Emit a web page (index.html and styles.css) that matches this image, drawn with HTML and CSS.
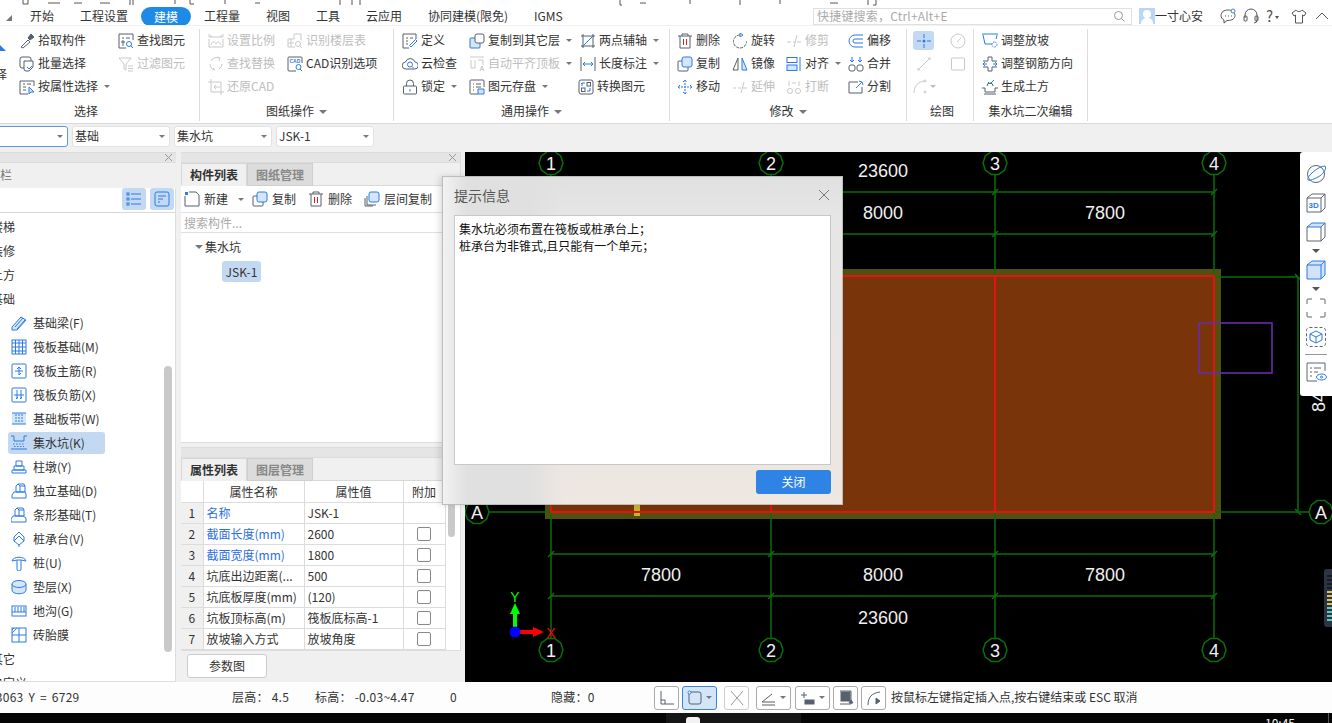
FILE: index.html
```html
<!DOCTYPE html>
<html lang="zh-CN">
<head>
<meta charset="utf-8">
<title>建模</title>
<link rel="stylesheet" href="styles.css">
</head>
<body>
<div class="app">
  <svg class="title-strip" width="1332" height="7" viewBox="0 0 1332 7"><path d="M23 0v4h5V0M48 3h12M74 3h8M100 3h10M130 0v5M133 0v5M175 0v4M190 0v4h4M225 0v4M255 3h5M340 0v5M352 0v5M360 0v5M620 0v5h2M640 3h6M690 0v4M740 0v5M780 0v4M830 3h8M868 0v5M876 0v5h-3"/></svg>

  <nav class="tabs">
    <svg class="tab-arrow" width="6" height="6" viewBox="0 0 6 6"><path d="M6 0v6H0z"/></svg>
    <span class="tab w50">开始</span>
    <span class="tab w61">工程设置</span>
    <span class="tab active">建模</span>
    <span class="tab w62">工程量</span>
    <span class="tab w50">视图</span>
    <span class="tab w50">工具</span>
    <span class="tab w62">云应用</span>
    <span class="tab w106">协同建模(限免)</span>
    <span class="tab w279">IGMS</span>
    <div class="search"><span>快捷键搜索，Ctrl+Alt+E</span><svg class="search-ic" width="12" height="12" viewBox="0 0 12 12"><circle cx="5.5" cy="5.5" r="4"/><path d="M8.5 8.5l3 3"/></svg></div>
    <svg class="avatar" width="16" height="16" viewBox="0 0 16 16"><rect width="16" height="16" fill="#b9d7f5"/><circle cx="8" cy="6" r="4" fill="#fff"/><path d="M2 16c0-5 3-6 6-6s6 1 6 6z" fill="#fff"/></svg>
    <span class="user">一寸心安</span>
    <svg class="top-ic first" width="16" height="16" viewBox="0 0 16 16"><path d="M8 2C4 2 1 4 1 7.500c0 2 1 3.500 3 4.500v3l3-2.500h1c4 0 7-2 7-5S12 2 8 2z"/><path d="M5 8h1M8 8h1M11 8h1"/><circle class="blue" cx="13" cy="3" r="2"/></svg>
    <svg class="top-ic" width="16" height="16" viewBox="0 0 16 16"><path d="M2 10V7a6 6 0 0 1 12 0v3M14 10v2a3 3 0 0 1-3 3"/><rect x="1" y="8" width="3" height="5" rx="1"/><rect x="12" y="8" width="3" height="5" rx="1"/></svg>
    <span class="help">?</span><span class="help-arrow"></span>
    <svg class="top-ic shirt" width="16" height="16" viewBox="0 0 16 16"><path d="M5 2L1 5l2 3 1.500-1v8h7V7L13 8l2-3-4-3c-1 2-5 2-6 0z"/></svg>
    <svg class="top-ic" width="16" height="16" viewBox="0 0 16 16"><path d="M2 11l6-6 6 6"/></svg>
  </nav>

  <section class="ribbon">
    <div class="group g1">
      <div class="cols">
        <div class="big"><span class="big-tri"></span><span class="big-text">选择</span></div>
        <div class="col c99">
          <div class="ri"><svg class="ic" viewBox="0 0 16 16"><path d="M2 14l7-7 2 2-7 6z"/><path class="fd" d="M9 5l3-4 3 3-4 3z"/></svg>拾取构件</div>
          <div class="ri"><svg class="ic" viewBox="0 0 16 16"><rect x="1" y="1" width="11" height="11" rx="2"/><path class="fw" d="M5 5h9v6l-4 4H7a2 2 0 0 1-2-2z"/><path class="bl" d="M8 11l2 2 3-3"/></svg>批量选择</div>
          <div class="ri"><svg class="ic" viewBox="0 0 16 16"><path d="M15 7V2H1v13h8M4 5h2M8 5h4M4 8h3M4 11h3"/><path class="fb" d="M10 8v7l2-2 3 0z"/></svg>按属性选择<i class="caret m5"></i></div>
        </div>
        <div class="col">
          <div class="ri"><svg class="ic" viewBox="0 0 16 16"><path d="M15 7V1H1v14h7M4 5h2M8 5h4M4 8h2v2H4zM4 12h2"/><circle class="bl" cx="11" cy="11" r="2.500"/><path class="bl" d="M13 13l2 2"/></svg>查找图元</div>
          <div class="ri off"><svg class="ic" viewBox="0 0 16 16"><path d="M1 2h12L8 8v6l-2-1V8zM10 10h5M10 12.500h5M10 15h5"/></svg>过滤图元</div>
        </div>
      </div>
      <div class="glabel">选择</div>
    </div>

    <div class="group g2">
      <div class="cols">
        <div class="col c79 off">
          <div class="ri"><svg class="ic" viewBox="0 0 16 16"><path d="M1 1v3h14V1M3 4v-2M13 4v-2M1 6v8h14V6M3 12c1-4 3-4 5-1 2-3 3-3 5 1"/></svg>设置比例</div>
          <div class="ri"><svg class="ic" viewBox="0 0 16 16"><path d="M3 5a6 6 0 0 1 8-3M14 8a6 6 0 0 1-3 5M2 8a6 6 0 0 0 5 6M9 1l3 1-1 3M7 14l-2-2"/></svg>查找替换</div>
          <div class="ri"><svg class="ic" viewBox="0 0 16 16"><path d="M3 0v13h13M0 3h13v13M12 8H6l2-2M6 8l2 2"/></svg>还原CAD</div>
        </div>
        <div class="col">
          <div class="ri off"><svg class="ic" viewBox="0 0 16 16"><path d="M7 1v5H1v8h7M7 1h7v6M4 6v8M1 10h6"/><circle cx="11" cy="11" r="2.500"/><path d="M13 13l2 2"/></svg>识别楼层表</div>
          <div class="ri"><svg class="ic" viewBox="0 0 16 16"><path d="M15 7V2a1 1 0 0 0-1-1H2a1 1 0 0 0-1 1v12a1 1 0 0 0 1 1h7"/><text class="cad" x="2.500" y="6.500">CAD</text><circle class="bl" cx="11.500" cy="11" r="2.500"/><path class="bl" d="M13 13l2 2"/></svg>CAD识别选项</div>
        </div>
      </div>
      <div class="glabel">图纸操作<i class="caret big-c"></i></div>
    </div>

    <div class="group g3">
      <div class="cols">
        <div class="col c67">
          <div class="ri"><svg class="ic" viewBox="0 0 16 16"><path d="M14 6V1H1v14h6M4 5h2M8 5h3M4 8h2M4 11h2"/><path class="bl" d="M9 14l6-6-1.500-1.500-6 6z"/></svg>定义</div>
          <div class="ri"><svg class="ic" viewBox="0 0 16 16"><path d="M4 13a3.500 3.500 0 0 1-.5-7A5 5 0 0 1 13 6a3.500 3.500 0 0 1-.5 7z"/><circle class="bl" cx="8" cy="8.500" r="2.500"/><path class="bl" d="M10 10.500l2 2"/></svg>云检查</div>
          <div class="ri"><svg class="ic" viewBox="0 0 16 16"><path d="M4.500 7V4.500a3.500 3.500 0 0 1 7 0V7"/><rect x="1.500" y="7" width="13" height="8" rx="1"/><path class="bl" d="M8 10v2.500"/></svg>锁定<i class="caret m5"></i></div>
        </div>
        <div class="col c111">
          <div class="ri"><svg class="ic" viewBox="0 0 16 16"><rect class="fb" x="1" y="5" width="10" height="10" rx="1"/><rect class="fw" x="6" y="1" width="9" height="9" rx="2"/></svg>复制到其它层<i class="caret m5"></i></div>
          <div class="ri off"><svg class="ic" viewBox="0 0 16 16"><path d="M1 1h14M2 4v8h4V4M9 4h5v5M11 15l2-5 2 5M11.500 13.500h3"/></svg>自动平齐顶板<i class="caret m5"></i></div>
          <div class="ri"><svg class="ic" viewBox="0 0 16 16"><path d="M15 8V2a1 1 0 0 0-1-1H2a1 1 0 0 0-1 1v12a1 1 0 0 0 1 1h7M4 5h1M7 5h5M4 8h1M7 8h5M4 11h1"/><path class="fb" d="M9 10h6v5H9z"/></svg>图元存盘<i class="caret m5"></i></div>
        </div>
        <div class="col">
          <div class="ri"><svg class="ic" viewBox="0 0 16 16"><path d="M1 3h14M3 1v14M13 1v14M1 13h14"/><path class="bl" d="M2 14L14 2"/></svg>两点辅轴<i class="caret m5"></i></div>
          <div class="ri"><svg class="ic" viewBox="0 0 16 16"><path d="M1 1v14M15 1v14"/><path class="bl" d="M3 8h10M5 6L3 8l2 2M11 6l2 2-2 2"/></svg>长度标注<i class="caret m5"></i></div>
          <div class="ri nudge"><svg class="ic" viewBox="0 0 16 16"><rect x="1" y="1" width="14" height="14" rx="2"/><path class="bl" d="M4 7V4h3M3 5l1-1M12 9v3H9"/><rect x="9" y="3.500" width="3.500" height="3.500"/><rect x="3.500" y="9" width="3.500" height="3.500"/></svg>转换图元</div>
        </div>
      </div>
      <div class="glabel">通用操作<i class="caret big-c"></i></div>
    </div>

    <div class="group g4">
      <div class="cols">
        <div class="col c55">
          <div class="ri"><svg class="ic" viewBox="0 0 16 16"><path d="M1 3h14M5 3V1h6v2M3 3v12h10V3"/><path class="red" d="M6.500 6v6M9.500 6v6"/></svg>删除</div>
          <div class="ri"><svg class="ic" viewBox="0 0 16 16"><rect x="1" y="5" width="10" height="10" rx="1"/><rect class="fb" x="5" y="1" width="10" height="10" rx="2"/></svg>复制</div>
          <div class="ri"><svg class="ic b" viewBox="0 0 16 16"><path d="M8 1v14M1 8h14M6 3l2-2 2 2M6 13l2 2 2-2M3 6L1 8l2 2M13 6l2 2-2 2" stroke-dasharray="2 1"/></svg>移动</div>
        </div>
        <div class="col c54">
          <div class="ri"><svg class="ic" viewBox="0 0 16 16"><path d="M8 2a6.500 6.500 0 1 0 6.500 6.500" stroke-dasharray="3 1"/><path class="bl" d="M8 0l3 2-3 2z"/></svg>旋转</div>
          <div class="ri"><svg class="ic" viewBox="0 0 16 16"><path d="M1 14L6 2v12z"/><path class="fb" d="M15 14L10 2v12z"/></svg>镜像</div>
          <div class="ri off"><svg class="ic" viewBox="0 0 16 16"><path d="M1 9h3M6 9h3M11 9h4M12 3L9 14" /></svg>延伸</div>
        </div>
        <div class="col c62">
          <div class="ri off"><svg class="ic" viewBox="0 0 16 16"><path d="M1 9h4M7 9h2M11 9h4M11 2L8 14"/></svg>修剪</div>
          <div class="ri"><svg class="ic" viewBox="0 0 16 16"><path class="bl" d="M14 1v14"/><rect class="fw b" x="1" y="1.500" width="10" height="5"/><rect class="fb" x="1" y="9" width="10" height="5.500"/></svg>对齐<i class="caret m5"></i></div>
          <div class="ri off"><svg class="ic" viewBox="0 0 16 16"><circle cx="4" cy="12" r="2.500"/><circle cx="12" cy="12" r="2.500"/><path d="M3 2v5M13 2v5M6 4h4"/></svg>打断</div>
        </div>
        <div class="col">
          <div class="ri"><svg class="ic b" viewBox="0 0 16 16"><path d="M15 2H7a6 6 0 0 0 0 12h8M15 6H7a2 2 0 0 0 0 4h8"/></svg>偏移</div>
          <div class="ri"><svg class="ic" viewBox="0 0 16 16"><rect x="1" y="9" width="6" height="6" rx="2"/><rect x="9" y="9" width="6" height="6" rx="2"/><path class="bl" d="M4 1v5M2 4l2 2 2-2M12 1v5M10 4l2 2 2-2"/></svg>合并</div>
          <div class="ri"><svg class="ic" viewBox="0 0 16 16"><path d="M10 3H1v11h13V8"/><path class="bl" d="M8 9l6-6M11 2l3 1 1 3"/></svg>分割</div>
        </div>
      </div>
      <div class="glabel">修改<i class="caret big-c"></i></div>
    </div>

    <div class="group g5">
      <div class="draw">
        <span class="draw-btn on"><svg class="ic b" viewBox="0 0 16 16"><path d="M1 8h4M11 8h4M8 1v4M8 11v4"/><circle class="dot" cx="8" cy="8" r="1.500"/></svg></span>
        <span class="draw-btn off"><svg class="ic" viewBox="0 0 16 16"><circle cx="8" cy="8" r="7"/><path d="M7 9l4-4"/></svg></span>
        <span class="draw-btn off"><svg class="ic" viewBox="0 0 16 16"><path d="M2 14L14 2"/><circle class="fw" cx="2.500" cy="13.500" r="1"/><circle class="fw" cx="13.500" cy="2.500" r="1"/></svg></span>
        <span class="draw-btn off"><svg class="ic" viewBox="0 0 16 16"><rect x="1.500" y="2" width="13" height="12" rx="1"/></svg></span>
        <span class="draw-btn off"><svg class="ic" viewBox="0 0 16 16"><path d="M2 14C2 7 6 3 12 2"/><circle class="fw" cx="13" cy="2" r="1"/><circle class="fw" cx="13" cy="13" r="1"/></svg><i class="caret"></i></span>
      </div>
      <div class="glabel g5l">绘图</div>
    </div>

    <div class="group g6">
      <div class="cols">
        <div class="col">
          <div class="ri"><svg class="ic" viewBox="0 0 16 16"><path class="bl" d="M0 1h16M1 2l2 9h7M15 2l-1 4"/><circle class="bl" cx="12.500" cy="11.500" r="2.500" stroke-dasharray="1.500 1"/></svg>调整放坡</div>
          <div class="ri"><svg class="ic" viewBox="0 0 16 16"><path d="M1 5h5V1h4v4h5M1 11h5v4h4v-4h5"/><path class="bl" d="M1 8h4M3 6L1 8l2 2M11 8h4M13 6l2 2-2 2"/></svg>调整钢筋方向</div>
          <div class="ri"><svg class="ic" viewBox="0 0 16 16"><path d="M0 9h3v4h10V9h3M2 15h12M5 7a3 3 0 0 1 6 0"/><path class="bl" d="M6 3l2 2 4-4"/></svg>生成土方</div>
        </div>
      </div>
      <div class="glabel">集水坑二次编辑</div>
    </div>
  </section>

  <div class="selbar">
    <div class="sel first"><i class="caret"></i></div>
    <div class="sel"><span>基础</span><i class="caret"></i></div>
    <div class="sel"><span>集水坑</span><i class="caret"></i></div>
    <div class="sel"><span>JSK-1</span><i class="caret"></i></div>
  </div>

  <main class="main">
    <aside class="nav">
      <div class="phead"><svg class="x" width="9" height="9" viewBox="0 0 9 9"><path d="M1 1l7 7M8 1L1 8"/></svg></div>
      <div class="nav-title"><span>导航栏</span></div>
      <div class="nav-tools">
        <span class="nt"><svg class="ic b" viewBox="0 0 16 16"><path d="M5 3h10M5 8h10M5 13h10"/><rect x="1" y="2" width="2" height="2"/><rect x="1" y="7" width="2" height="2"/><rect x="1" y="12" width="2" height="2"/></svg></span>
        <span class="nt"><svg class="ic b" viewBox="0 0 16 16"><rect x="1" y="1" width="14" height="14" rx="2"/><path d="M4 5h8M4 8h5M4 11h2"/></svg></span>
      </div>
      <div class="nav-list">
        <div class="nr top">楼梯</div>
        <div class="nr top">装修</div>
        <div class="nr top">土方</div>
        <div class="nr top">基础</div>
        <div class="nr"><svg class="ic b" viewBox="0 0 16 16"><path class="fb" d="M1 12l9-10 5 3-9 10H1zM4 12l8-9M6 14l8-9"/></svg>基础梁(F)</div>
        <div class="nr"><svg class="ic b" viewBox="0 0 16 16"><rect x="1" y="1" width="14" height="14"/><path d="M1 4h14M1 8h14M1 12h14M4.500 1v14M8 1v14M11.500 1v14"/></svg>筏板基础(M)</div>
        <div class="nr"><svg class="ic b" viewBox="0 0 16 16"><rect x="1" y="1" width="14" height="14" rx="1"/><path d="M4 8h8M8 4v8M6 6l2-2 2 2M10 10l-2 2"/></svg>筏板主筋(R)</div>
        <div class="nr"><svg class="ic b" viewBox="0 0 16 16"><rect x="1" y="1" width="14" height="14" rx="1"/><path d="M6 3v9M10 3v9M3 8h10M5 12l2-2M9 12l2-2"/></svg>筏板负筋(X)</div>
        <div class="nr"><svg class="ic b" viewBox="0 0 16 16"><rect class="pale" x="1" y="2" width="14" height="11"/><path d="M1 2h14M1 13h14"/><path d="M5 3v9M8 3v9M11 3v9" stroke-dasharray="2 1"/></svg>基础板带(W)</div>
        <div class="nr sel-row"><svg class="ic b" viewBox="0 0 16 16"><path d="M0 1h3v5h10V1h3M0 14h16"/><path d="M2 9h12M3 11.500h10" stroke-dasharray="1.500 1.500"/></svg>集水坑(K)</div>
        <div class="nr"><svg class="ic b" viewBox="0 0 16 16"><path d="M5 2h6v5H5zM3 7h10v4H3zM1 11h14v3H1z"/></svg>柱墩(Y)</div>
        <div class="nr"><svg class="ic b" viewBox="0 0 16 16"><path d="M7 1h6l1 2v6H5V3zM3 9h11l1 2v4H1v-3zM7 1l2 2h5M9 3v6"/></svg>独立基础(D)</div>
        <div class="nr"><svg class="ic b" viewBox="0 0 16 16"><path d="M6 1h6l1 2v6H4V3zM2 9h10l3 2v4H0v-3zM6 1l2 2h5M8 3v6"/></svg>条形基础(T)</div>
        <div class="nr"><svg class="ic b" viewBox="0 0 16 16"><path d="M8 1l5 5v4l-5 4-5-4V6zM3 10l5-5 5 5M8 14v2"/></svg>桩承台(V)</div>
        <div class="nr"><svg class="ic b" viewBox="0 0 16 16"><path d="M1 6c1-5 13-5 14 0l-5-1H6zM6 5v9a2 2 0 0 0 4 0V5"/></svg>桩(U)</div>
        <div class="nr"><svg class="ic b" viewBox="0 0 16 16"><path class="fb" d="M1 5v6c0 5 14 5 14 0V5"/><ellipse class="fb" cx="8" cy="5" rx="7" ry="3.500"/></svg>垫层(X)</div>
        <div class="nr"><svg class="ic b" viewBox="0 0 16 16"><rect x="1" y="3" width="14" height="10"/><path d="M1 9h14M4 4v5M7 4v5M10 4v5M13 4v5"/></svg>地沟(G)</div>
        <div class="nr"><svg class="ic b" viewBox="0 0 16 16"><rect x="1" y="1" width="14" height="14"/><path d="M8 1v14M1 8h14M1 6l5-5M1 3l2-2"/></svg>砖胎膜</div>
        <div class="nr top">其它</div>
        <div class="nr top">自定义</div>
        <span class="sb"></span>
      </div>
    </aside>

    <div class="mid">
      <section class="pane list-pane">
        <div class="phead"><svg class="x" width="9" height="9" viewBox="0 0 9 9"><path d="M1 1l7 7M8 1L1 8"/></svg></div>
        <div class="ptabs"><span class="ptab on">构件列表</span><span class="ptab">图纸管理</span></div>
        <div class="ptools">
          <span class="pt"><svg class="ic" viewBox="0 0 16 16"><path d="M5 1h7l3 3v11H1V5"/><rect class="fbl" x="1" y="1" width="3" height="3"/></svg>新建<i class="caret m5"></i></span>
          <span class="pt"><svg class="ic" viewBox="0 0 16 16"><rect x="1" y="5" width="10" height="10" rx="1"/><rect class="fb" x="5" y="1" width="10" height="10" rx="2"/></svg>复制</span>
          <span class="pt"><svg class="ic" viewBox="0 0 16 16"><path d="M1 3h14M5 3V1h6v2M3 3v12h10V3"/><path class="red" d="M6.500 6v6M9.500 6v6"/></svg>删除</span>
          <span class="pt"><svg class="ic" viewBox="0 0 16 16"><path d="M3 5v9h9M1 7v8h8"/><rect class="fb" x="5" y="1" width="10" height="10" rx="2"/></svg>层间复制</span>
        </div>
        <div class="psearch">搜索构件...</div>
        <div class="ptree">
          <div class="pnode"><i class="caret dark"></i>集水坑</div>
          <div class="pchild"><span>JSK-1</span></div>
        </div>
      </section>

      <section class="pane prop-pane">
        <div class="phead"></div>
        <div class="ptabs"><span class="ptab on">属性列表</span><span class="ptab">图层管理</span></div>
        <div class="tbl-wrap">
          <table class="tbl">
            <colgroup><col class="cn"><col class="cp"><col class="cv"><col class="ca"></colgroup>
            <thead><tr><th></th><th>属性名称</th><th>属性值</th><th>附加</th></tr></thead>
            <tbody>
              <tr><td class="num">1</td><td class="link">名称</td><td>JSK-1</td><td></td></tr>
              <tr><td class="num">2</td><td class="link">截面长度(mm)</td><td>2600</td><td class="chk"><i></i></td></tr>
              <tr><td class="num">3</td><td class="link">截面宽度(mm)</td><td>1800</td><td class="chk"><i></i></td></tr>
              <tr><td class="num">4</td><td>坑底出边距离(...</td><td>500</td><td class="chk"><i></i></td></tr>
              <tr><td class="num">5</td><td>坑底板厚度(mm)</td><td>(120)</td><td class="chk"><i></i></td></tr>
              <tr><td class="num">6</td><td>坑板顶标高(m)</td><td>筏板底标高-1</td><td class="chk"><i></i></td></tr>
              <tr><td class="num">7</td><td>放坡输入方式</td><td>放坡角度</td><td class="chk"><i></i></td></tr>
            </tbody>
          </table>
          <span class="tsb"></span>
        </div>
        <div class="pfoot"><button class="param">参数图</button></div>
      </section>
    </div>

    <div class="canvas">
      <svg class="cad-svg" width="867" height="530" viewBox="465 152 867 530">
        <defs><polygon id="oct" points="12,0 9.700,7.050 3.700,11.400 -3.700,11.400 -9.700,7.050 -12,0 -9.700,-7.050 -3.700,-11.400 3.700,-11.400 9.700,-7.050"/></defs>
        <rect x="545" y="269" width="676" height="250" fill="#50500f"/>
        <rect x="551" y="276" width="663" height="236" fill="#7a3409"/>
        <rect x="634" y="505" width="6" height="11" fill="#c4b622"/>
        <g class="grn">
          <path d="M551 175V277M771 175V277M995 175V277M1214 175V277M551 512V638M771 512V638M995 512V638M1214 512V638"/>
          <path d="M551 192H1214M551 234H1214M551 554H1214M551 596H1214"/>
          <path d="M489 512H1309M1214 277H1298M1298 277V512"/>
          <path d="M548 195l6-6M768 195l6-6M992 195l6-6M1211 195l6-6M548 237l6-6M768 237l6-6M992 237l6-6M1211 237l6-6M548 557l6-6M768 557l6-6M992 557l6-6M1211 557l6-6M548 599l6-6M768 599l6-6M992 599l6-6M1211 599l6-6M1295 274l6 6M1295 509l6 6"/>
          <use href="#oct" x="551" y="163"/><use href="#oct" x="771" y="163"/><use href="#oct" x="995" y="163"/><use href="#oct" x="1214" y="163"/>
          <use href="#oct" x="551" y="650"/><use href="#oct" x="771" y="650"/><use href="#oct" x="995" y="650"/><use href="#oct" x="1214" y="650"/>
          <use href="#oct" x="477" y="512"/><use href="#oct" x="1321" y="512"/>
        </g>
        <path class="redl" d="M551 276H1214V512H551ZM771 276V512M995 276V512"/>
        <rect class="pur" x="1199" y="323" width="73" height="50"/>
        <g class="dim">
          <text x="883" y="177">23600</text><text x="883" y="219">8000</text><text x="1105" y="219">7800</text>
          <text x="661" y="581">7800</text><text x="883" y="581">8000</text><text x="1105" y="581">7800</text><text x="883" y="624">23600</text>
          <text x="551" y="170">1</text><text x="771" y="170">2</text><text x="995" y="170">3</text><text x="1214" y="170">4</text>
          <text x="551" y="657">1</text><text x="771" y="657">2</text><text x="995" y="657">3</text><text x="1214" y="657">4</text>
          <text x="477" y="519">A</text><text x="1321" y="519">A</text>
          <text class="rot" transform="translate(1325 412) rotate(-90)">8400</text>
        </g>
        <path d="M515 632V613" stroke="#0f0" stroke-width="4"/><path d="M510 614l5-11 5 11z" fill="#0f0"/>
        <path d="M515 632H535" stroke="#f00" stroke-width="4"/><path d="M533 627l11 5-11 5z" fill="#f00"/>
        <circle cx="515" cy="632" r="5.500" fill="#00f"/>
        <text class="axl" x="515" y="602" fill="#0f0">Y</text><text class="axl" x="551" y="638" fill="#f00">X</text>
        <rect x="1324" y="569" width="10" height="58" rx="3" fill="#2c3342"/>
        <path d="M1327 576h5M1327 580h5M1327 584h5M1327 588h5" stroke="#151a24" stroke-width="2"/>
        <path d="M1327 592h5M1327 596h5M1327 600h5M1327 604h5" stroke="#d5c25e" stroke-width="2"/>
        <path d="M1327 608h5M1327 612h5M1327 616h5M1327 620h5" stroke="#62c7b8" stroke-width="2"/>
      </svg>
      <div class="vt">
        <svg class="vi" viewBox="0 0 22 22"><circle cx="11" cy="11" r="8.500"/><path class="bl" d="M3 17C1 14 13 3 20 3c2 2-1 8-7 11s-9 4-10 3z"/></svg>
        <svg class="vi" viewBox="0 0 22 22"><path d="M2 6l5-4h13v14l-4 4H2zM2 6h14v14M16 6l4-4"/><text class="v3d" x="3.500" y="16">3D</text></svg>
        <svg class="vi" viewBox="0 0 22 22"><path d="M2 6v14h14l4-4V2"/><path class="bl lt" d="M2 6l5-4h13l-4 4z"/><path d="M16 6v14"/></svg>
        <i class="vcaret"></i>
        <svg class="vi" viewBox="0 0 22 22"><path class="bl lt" d="M2 6l5-4h13v14l-4 4H2z"/><path class="bl" d="M2 6h14v14M16 6l4-4"/></svg>
        <i class="vcaret"></i>
        <svg class="vi" viewBox="0 0 22 22"><path d="M7 2H3a1 1 0 0 0-1 1v4M15 2h4a1 1 0 0 1 1 1v4M7 20H3a1 1 0 0 1-1-1v-4M15 20h4a1 1 0 0 0 1-1v-4"/></svg>
        <svg class="vi" viewBox="0 0 22 22"><rect x="1.500" y="1.500" width="19" height="19" rx="3" stroke-dasharray="3 2"/><path class="bl" d="M11 5l6 3v6l-6 3-6-3V8zM5 8l6 3 6-3M11 11v6"/></svg>
        <span class="vline"></span>
        <svg class="vi" viewBox="0 0 22 22"><path d="M20 10V2H2v18h10M5 7h2M9 7h7M5 11h2M9 11h4M5 15h2"/><ellipse class="bl" cx="16.500" cy="16" rx="5" ry="3"/><circle class="bl" cx="16.500" cy="16" r="1"/></svg>
      </div>
    </div>
  </main>

  <footer class="status">
    <span class="s1"><span class="coord">X = 23063 Y = 6729</span></span>
    <span class="s2">层高： 4.5</span>
    <span class="s3">标高： -0.03~4.47</span>
    <span class="s4">0</span>
    <span class="s5">隐藏：0</span>
    <div class="sbtns">
      <span class="sbtn w25"><svg class="ic" viewBox="0 0 16 16"><path d="M2 1v13h13M2 10h4v4"/></svg></span>
      <span class="sbtn w35 on"><svg class="ic" viewBox="0 0 16 16"><rect x="2" y="2" width="12" height="12" rx="2"/><circle class="fw bl" cx="2.500" cy="2.500" r="1.500"/></svg><i class="caret"></i></span>
      <span class="sbtn w25 soft"><svg class="ic" viewBox="0 0 16 16"><path d="M2 1l12 14M14 1L2 15"/></svg></span>
      <span class="sbtn w35 wide"><svg class="ic" viewBox="0 0 16 16"><path d="M1 12l10-8M1 12h13M1 15h13"/></svg><i class="caret"></i></span>
      <span class="sbtn w35"><svg class="ic" viewBox="0 0 16 16"><path d="M1 5h6M4 2v6"/><rect class="fd" x="5" y="10" width="9" height="4"/></svg><i class="caret"></i></span>
      <span class="sbtn w25"><svg class="ic" viewBox="0 0 16 16"><rect class="fd" x="3" y="2" width="9" height="9"/><path d="M2 1h11v13H2"/><path class="fd" d="M13 10l2 3h-4z"/></svg></span>
      <span class="sbtn w25"><svg class="ic" viewBox="0 0 16 16"><path d="M2 15C2 7 6 3 14 2"/><path class="fd" d="M10 8l4 3-4 3z"/></svg></span>
    </div>
    <span class="hint">按鼠标左键指定插入点,按右键结束或 ESC 取消</span>
  </footer>

  <div class="taskbar"><span class="task-zone"><i></i></span><span class="clock">10:45</span><span class="task-sep"></span></div>

  <div class="dialog">
    <header class="dlg-head"><span>提示信息</span><svg class="dlg-x" width="12" height="12" viewBox="0 0 12 12"><path d="M1 1l10 10M11 1L1 11"/></svg></header>
    <div class="dlg-body">集水坑必须布置在筏板或桩承台上；<br>桩承台为非锥式,且只能有一个单元；</div>
    <div class="dlg-foot"><button class="dlg-close">关闭</button></div>
  </div>
</div>
</body>
</html>
```

FILE: styles.css
```css
* { box-sizing: border-box; }
html, body { margin: 0; height: 100%; overflow: hidden; background: #fff; }
body { font: 12px/1.2 "Noto Sans CJK SC", "Liberation Sans", sans-serif; color: #333; }
.app { position: relative; width: 1332px; height: 723px; overflow: hidden; display: flex; flex-direction: column; }

/* title strip */
.title-strip { display: block; flex: none; }
.title-strip path { fill: none; stroke: #555; stroke-width: 1; }

/* tabs */
.tabs { flex: none; height: 18px; display: flex; align-items: center; padding-left: 6px; background: #fff; }
.tab-arrow { flex: none; margin-right: 18px; fill: #777; margin-top: 3px; }
.tab { flex: none; line-height: 18px; white-space: nowrap; }
.w50 { width: 50px; } .w61 { width: 61px; } .w62 { width: 62px; } .w106 { width: 106px; } .w279 { width: 279px; }
.tab.active { width: 50px; height: 19px; margin-right: 13px; background: #1e8ae8; color: #fff; border-radius: 10px; text-align: center; font-size: 12px; line-height: 19px; }
.search { flex: none; width: 319px; height: 17px; border: 1px solid #e0e0e0; display: flex; align-items: center; justify-content: space-between; padding: 0 6px 0 3px; color: #aaa; letter-spacing: .2px; }
.search-ic { fill: none; stroke: #999; stroke-width: 1; }
.avatar { flex: none; margin-left: 7px; }
.user { flex: none; width: 48px; }
.top-ic { flex: none; margin-left: 7px; fill: none; stroke: #555; stroke-width: 1; }
.top-ic.first { margin-left: 17px; }
.top-ic .blue { stroke: #3b82d8; fill: #fff; }
.help { flex: none; margin-left: 7px; font-size: 15px; color: #555; line-height: 16px; }
.help-arrow { flex: none; width: 0; height: 0; margin: 2px 0 0 2px; border: 2px solid transparent; border-top: 3px solid #555; border-bottom: 0; }
.shirt { margin-left: 12px; }

/* ribbon */
.ribbon { flex: none; height: 99px; display: flex; padding-top: 3px; border-top: 1px solid #f0f0f0; border-bottom: 1px solid #d9d9d9; background: #fff; }
.group { flex: none; height: 92px; border-right: 1px solid #dcdcdc; display: flex; flex-direction: column; }
.g1 { width: 200px; } .g2 { width: 194px; padding-left: 8px; } .g3 { width: 276px; padding-left: 8px; }
.g4 { width: 237px; padding-left: 7px; } .g5 { width: 67px; padding-left: 6px; } .g6 { width: 114px; padding-left: 8px; }
.cols { flex: none; height: 70px; display: flex; }
.col { flex: none; }
.c99 { width: 99px; } .c79 { width: 79px; } .c67 { width: 67px; } .c111 { width: 111px; } .c55 { width: 55px; } .c54 { width: 54px; } .c62 { width: 62px; }
.big { flex: none; width: 19px; overflow: hidden; position: relative; }
.big-text { display: block; margin: 38px 0 0 -17px; width: 30px; white-space: nowrap; }
.big-tri { position: absolute; left: -6px; top: 16px; width: 0; height: 0; border: 6px solid transparent; border-bottom: 6px solid #2c7be5; border-top: 0; }
.ri { height: 23px; display: flex; align-items: center; gap: 3px; white-space: nowrap; }
.ri.off, .off .ri { color: #bdbdbd; }
.nudge { margin-left: -2px; }
.glabel { flex: none; height: 20px; margin-top: 2px; text-align: center; line-height: 20px; white-space: nowrap; margin-left: -8px; }
.g1 .glabel { margin-left: 0; width: 172px; }
.g4 .glabel { margin-left: -7px; }
.g5 .glabel { margin-left: -6px; width: 70px; }

/* svg icon base */
.ic { flex: none; width: 16px; height: 16px; fill: none; stroke: #56606e; stroke-width: 1; }
.ic.b { stroke: #2c7be5; }
.off .ic, .ic.off { stroke: #c9c9c9; }
.ic .bl, .vi .bl { stroke: #2c7be5; }
.ic .fb { fill: #d6e6f9; stroke: #2c7be5; }
.ic .fw { fill: #fff; }
.ic .b { stroke: #2c7be5; }
.ic .fd { fill: #56606e; }
.ic .fbl { fill: #2c7be5; stroke: none; }
.ic .pale { fill: #d6e6f9; stroke: none; }
.ic .red { stroke: #d22; }
.ic .dot { fill: #2c7be5; stroke: none; }
.ic .cad { font: bold 5px "Liberation Sans", sans-serif; fill: #2c7be5; stroke: none; }

/* caret */
.caret { display: inline-block; flex: none; width: 0; height: 0; border-left: 3px solid transparent; border-right: 3px solid transparent; border-top: 3px solid #777; }
.caret.m5 { margin-left: 3px; }
.caret.big-c { border-left-width: 4px; border-right-width: 4px; border-top-width: 4px; margin-left: 5px; vertical-align: 2px; }

/* draw group */
.draw { height: 70px; display: grid; grid-template-columns: 34px 21px; grid-auto-rows: 23px; align-items: center; }
.draw-btn { display: flex; align-items: center; justify-content: center; width: 21px; height: 19px; border-radius: 3px; gap: 2px; }
.draw-btn.on { background: #c2d9f1; }
.draw-btn.off .ic { stroke: #c9c9c9; }
.draw-btn.off .caret { border-top-color: #bbb; }

/* select bar */
.selbar { flex: none; height: 27px; display: flex; gap: 4px; padding: 2px 0 0 0; background: #f0f0f0; margin-top: 0; }
.sel { flex: none; width: 98px; height: 21px; background: #fff; border: 1px solid #e2e2e2; border-radius: 3px; display: flex; align-items: center; justify-content: space-between; padding: 0 4px 0 2px; font-size: 12px; }
.sel.first { width: 72px; margin-left: -4px; border-color: #5b9ae0; justify-content: flex-end; }

/* main */
.main { flex: none; height: 531px; display: flex; gap: 5px; background: #f0f0f0; padding-top: 1px; }
.phead { flex: none; height: 11px; background: #e5e5e5; border: 1px solid #dcdcdc; border-width: 1px 0; display: flex; justify-content: flex-end; align-items: center; padding-right: 3px; }
.x { fill: none; stroke: #999; stroke-width: 1; }

/* nav */
.nav { flex: none; width: 176px; display: flex; flex-direction: column; }
.nav-title { flex: none; height: 25px; overflow: hidden; line-height: 24px; color: #777; font-size: 12px; white-space: nowrap; }
.nav-title span { display: block; margin-left: -24px; }
.nav-tools { flex: none; height: 25px; background: #fff; border-bottom: 1px solid #d8d8d8; border-right: 1px solid #ddd; display: flex; justify-content: flex-end; gap: 4px; padding-right: 1px; }
.nt { width: 24px; height: 22px; background: #c2d9f1; border-radius: 3px; display: flex; align-items: center; justify-content: center; }
.nav-list { flex: 1; min-height: 0; background: #fff; border-right: 1px solid #ddd; border-bottom: 1px solid #ddd; overflow: hidden; position: relative; padding-top: 2px; }
.nr { height: 24px; display: flex; align-items: center; gap: 6px; width: 97px; margin-left: 8px; padding-left: 3px; white-space: nowrap; }
.nr.top { margin-left: -9px; padding-left: 0; }
.nr.sel-row { background: #c2d9f1; border-radius: 3px; height: 22px; margin-top: 1px; margin-bottom: 1px; }
.sb { position: absolute; right: 3px; top: 153px; width: 8px; height: 286px; background: #c9c9c9; border-radius: 4px; }

/* middle */
.mid { flex: none; width: 280px; display: flex; flex-direction: column; gap: 4px; margin-right: -1px; }
.pane { flex: none; display: flex; flex-direction: column; background: #fff; }
.list-pane { height: 291px; border-bottom: 1px solid #ddd; border-right: 1px solid #ddd; }
.prop-pane { flex: 1; min-height: 0; background: #f0f0f0; }
.ptabs { flex: none; height: 23px; display: flex; background: #f0f0f0; border-bottom: 1px solid #d8d8d8; }
.ptab { width: 66px; height: 23px; background: #dcdcdc; border: 1px solid #cfcfcf; color: #888; font-weight: 700; text-align: center; line-height: 21px; }
.ptab.on { background: #f0f0f0; color: #333; border-color: #d8d8d8; border-bottom-color: #f0f0f0; }
.ptools { flex: none; height: 27px; display: flex; align-items: center; gap: 12px; padding-left: 3px; border-bottom: 1px solid #e0e0e0; }
.pt { display: flex; align-items: center; gap: 4px; white-space: nowrap; }
.pt .caret { margin-left: 6px; margin-right: -4px; }
.psearch { flex: none; height: 20px; padding-left: 3px; color: #aaa; line-height: 19px; border-bottom: 1px solid #e0e0e0; }
.pnode { height: 28px; display: flex; align-items: center; padding-left: 14px; gap: 2px; }
.pnode .caret { border-left-width: 4px; border-right-width: 4px; border-top-width: 4px; }
.pchild { padding-left: 41px; }
.pchild span { display: inline-block; width: 39px; height: 21px; line-height: 21px; text-align: center; background: #c2d9f1; border-radius: 3px; }

/* table */
.tbl-wrap { flex: none; height: 170px; position: relative; overflow: hidden; background: #fff; border: 1px solid #ddd; border-width: 0 1px 1px 0; }
.tbl { border-collapse: collapse; table-layout: fixed; width: 264px; }
.cn { width: 22px; } .cp { width: 101px; } .cv { width: 99px; } .ca { width: 42px; }
.tbl th, .tbl td { height: 21px; padding: 2px 3px 0; border: 1px solid #dcdcdc; font-weight: 400; white-space: nowrap; overflow: hidden; }
.tbl th { text-align: center; }
.tbl thead tr th { border-top: 0; }
.tbl tr > :first-child { border-left: 0; }
.tbl .num { background: #f0f0f0; text-align: center; }
.tbl .link { color: #2c6fe0; }
.tbl .chk { text-align: center; padding-top: 0; }
.chk i { display: inline-block; width: 14px; height: 14px; border: 1px solid #888; border-radius: 2px; vertical-align: middle; }
.tsb { position: absolute; right: 5px; top: 0; width: 7px; height: 56px; background: #c9c9c9; border-radius: 4px; }
.pfoot { flex: 1; padding: 3px 0 0 6px; }
.param { display: block; width: 80px; height: 24px; background: #fff; border: 1px solid #ccc; border-radius: 3px; font: inherit; color: #333; padding: 0; }

/* canvas */
.canvas { flex: 1; min-width: 0; position: relative; background: #000; overflow: hidden; }
.cad-svg { display: block; }
.grn { fill: none; stroke: #0a6e0a; stroke-width: 1.500; }
.redl { fill: none; stroke: #e81010; stroke-width: 2; }
.pur { fill: none; stroke: #6a2ca8; stroke-width: 1.600; }
.dim text { font: 18px "Liberation Sans", sans-serif; fill: #f0f0f0; text-anchor: middle; }
.dim .rot { text-anchor: start; }
.axl { font: 14px "Liberation Sans", sans-serif; text-anchor: middle; }
.vt { position: absolute; right: 0; top: 0; width: 32px; height: 244px; background: #fff; border-radius: 3px 0 0 3px; display: flex; flex-direction: column; align-items: center; padding-top: 11px; }
.vi { flex: none; width: 22px; height: 22px; margin-bottom: 7px; fill: none; stroke: #5c6675; stroke-width: 1; }
.vi .lt { fill: #d2e3f8; }
.v3d { font: bold 8px "Liberation Sans", sans-serif; fill: #2c7be5; stroke: none; }
.vcaret { flex: none; width: 0; height: 0; border-left: 4px solid transparent; border-right: 4px solid transparent; border-top: 4px solid #555; margin: -1px 0 6px; }
.vline { flex: none; width: 22px; height: 1px; background: #999; margin: -1px 0 6px; }

/* status */
.status { flex: none; height: 31px; background: #fdfdfd; display: flex; align-items: center; white-space: nowrap; letter-spacing: .25px; }
.s1 { flex: none; width: 232px; overflow: hidden; }
.coord { display: block; margin-left: -35px; word-spacing: 2px; }
.s2 { flex: none; width: 83px; } .s3 { flex: none; width: 135px; } .s4 { flex: none; width: 101px; } .s5 { flex: none; width: 103px; }
.sbtns { flex: none; display: flex; gap: 3px; }
.sbtn { flex: none; height: 24px; border: 1px solid #aaa; border-radius: 3px; background: #fff; display: flex; align-items: center; justify-content: center; gap: 3px; }
.w25 { width: 25px; } .w35 { width: 35px; }
.sbtn.on { background: #d5e5f8; border-color: #3b82d8; }
.sbtn.soft { border-color: #ccc; margin: 0 4px; }
.sbtn.soft .ic { stroke: #999; }
.sbtn.wide { margin-right: 1px; }
.hint { margin-left: 5px; letter-spacing: 0; }

/* taskbar */
.taskbar { flex: none; height: 10px; background: #050505; display: flex; overflow: hidden; }
.task-zone { flex: none; width: 135px; margin-left: 666px; background: #151515; padding: 4px 0 0 20px; }
.task-zone i { display: block; width: 14px; height: 14px; background: #f2f2f2; border-radius: 3px; }
.clock { flex: none; margin-left: 464px; width: 63px; color: #f4f4f4; font-size: 12px; line-height: 12px; padding-top: 4px; }
.task-sep { flex: none; width: 1px; background: #555; }

/* dialog */
.dialog { position: absolute; left: 442px; top: 176px; width: 401px; height: 329px; display: flex; flex-direction: column; padding: 0 11px; border: 1px solid #bdbdbd; background: linear-gradient(90deg, #f2f2f2 0, #e0e0e0 6%, #e0e0e0 22%, rgba(224, 224, 224, 0) 30%), linear-gradient(#e0e0e0 0, #e6e6e6 40px, #e9e6e3 60%, #eee7e2 100%); box-shadow: -3px 0 6px rgba(0, 0, 0, .12); }
.dlg-head { flex: none; height: 36px; margin-bottom: 2px; display: flex; align-items: center; justify-content: space-between; font-size: 14px; color: #555; }
.dlg-x { fill: none; stroke: #777; stroke-width: 1; margin-right: 1px; }
.dlg-body { flex: none; height: 250px; background: #fff; border: 1px solid #c8c8c8; padding: 4px 4px; color: #111; line-height: 17px; }
.dlg-foot { flex: none; display: flex; justify-content: flex-end; padding-top: 5px; }
.dlg-close { width: 75px; height: 24px; background: #2f83e4; color: #fff; border: 0; border-radius: 3px; font: inherit; padding: 0; }
```
